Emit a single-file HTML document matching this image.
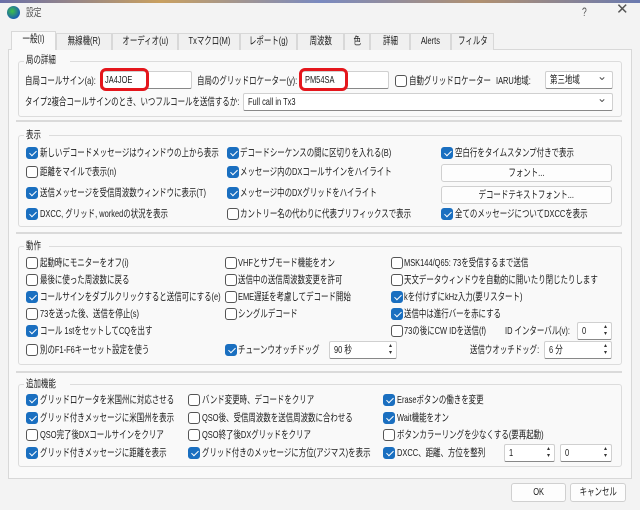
<!DOCTYPE html>
<html><head><meta charset="utf-8"><style>
*{box-sizing:border-box;margin:0;padding:0}
body{width:640px;height:510px;overflow:hidden;background:#f3f3f3;font-family:"Liberation Sans","Noto Sans CJK JP",sans-serif;font-size:10.5px;color:#1a1a1a;position:relative}
.a{position:absolute;white-space:nowrap;line-height:14px;transform:scaleX(.71);transform-origin:0 0}
.t{display:inline-block;white-space:nowrap;transform:scaleX(.71);transform-origin:0 0}
.c{display:inline-block;white-space:nowrap;transform:scaleX(.71);transform-origin:50% 0}
.cb{position:absolute;width:12px;height:12px;border:1px solid #555;border-radius:3px;background:#fff}
.cb.on{background:#1a6fc0;border-color:#1a6fc0}
.cb.on:after{content:"";position:absolute;left:3.5px;top:1px;width:3px;height:6px;border:solid #fff;border-width:0 1.5px 1.5px 0;transform:rotate(45deg)}
.in{position:absolute;height:18px;background:#fff;border:1px solid #d0d0d0;border-bottom:1px solid #888;border-radius:2px;padding:1px 4px;line-height:15px;white-space:nowrap;overflow:hidden}
.btn{position:absolute;height:18px;background:#fdfdfd;border:1px solid #d0d0d0;border-radius:3px;text-align:center;line-height:16px;white-space:nowrap;overflow:hidden}
.gb{position:absolute;border:1px solid #dcdcdc;border-radius:3px;background:#f9f9f9}
.gl{position:absolute;background:#f9f9f9;padding:0 2px;line-height:13px;white-space:nowrap}
.sep{position:absolute;left:16px;width:606px;height:2px;background:#dadada}
.tab{position:absolute;top:33px;height:17px;border:1px solid #d8d8d8;border-bottom:none;background:#f0f0f0;text-align:center;line-height:15px;white-space:nowrap;overflow:hidden}
.dd:after{content:"⌄";position:absolute;right:5px;top:-3px;font-size:12px;color:#555}
.sp:after{content:"▴\A▾";white-space:pre;position:absolute;right:4px;top:1px;font-size:6px;line-height:7px;color:#333}
.red{position:absolute;border:3px solid #e4161c;border-radius:6px}
</style></head><body>
<div style="position:absolute;left:0;top:0;width:640px;height:3px;background:linear-gradient(90deg,#6a6fa8,#c9a060,#7a8ac0,#b09070,#6a7ab0)"></div>
<div style="position:absolute;left:7px;top:6px;width:13px;height:13px;border-radius:50%;background:radial-gradient(circle at 40% 40%,#3ec04a,#1a5fb0 70%)"></div>
<div class="a" style="left:26px;top:6px;color:#555;font-size:11px">設定</div>
<div class="a" style="left:582px;top:5px;color:#555;font-size:12px">?</div>
<div class="a" style="left:616px;top:3px;color:#555;font-size:15px;transform:none">✕</div>
<div style="position:absolute;left:8px;top:49px;width:624px;height:430px;background:#f9f9f9;border:1px solid #d8d8d8"></div>
<div class="tab" style="left:11px;width:45px;top:31px;height:19px;background:#f9f9f9"><span class="c">一般(I)</span></div>
<div class="tab" style="left:56px;width:56px"><span class="c">無線機(R)</span></div>
<div class="tab" style="left:112px;width:66px"><span class="c">オーディオ(u)</span></div>
<div class="tab" style="left:178px;width:62px"><span class="c">Txマクロ(M)</span></div>
<div class="tab" style="left:240px;width:57px"><span class="c">レポート(g)</span></div>
<div class="tab" style="left:297px;width:47px"><span class="c">周波数</span></div>
<div class="tab" style="left:344px;width:26px"><span class="c">色</span></div>
<div class="tab" style="left:370px;width:40px"><span class="c">詳細</span></div>
<div class="tab" style="left:410px;width:41px"><span class="c">Alerts</span></div>
<div class="tab" style="left:451px;width:43px"><span class="c">フィルタ</span></div>

<div class="gb" style="left:18px;top:61px;width:604px;height:56px"></div>
<div class="gl" style="left:24px;top:54px"><span class="t">局の詳細</span></div>
<div class="a" style="left:25px;top:74px">自局コールサイン(a):</div>
<div class="in" style="left:100px;top:71px;width:92px"><span class="t">JA4JOE</span></div>
<div class="red" style="left:100px;top:68px;width:49px;height:23px"></div>
<div class="a" style="left:197px;top:74px">自局のグリッドロケーター(y):</div>
<div class="in" style="left:300px;top:71px;width:89px"><span class="t">PM54SA</span></div>
<div class="red" style="left:299px;top:68px;width:49px;height:23px"></div>
<div class="cb" style="left:395px;top:75px"></div>
<div class="a" style="left:409px;top:74px">自動グリッドロケーター</div>
<div class="a" style="left:496px;top:74px">IARU地域:</div>
<div class="in dd" style="left:545px;top:71px;width:68px"><span class="t">第三地域</span></div>
<div class="a" style="left:25px;top:95px">タイプ2複合コールサインのとき、いつフルコールを送信するか:</div>
<div class="in dd" style="left:243px;top:93px;width:370px"><span class="t">Full call in Tx3</span></div>

<div class="sep" style="top:120px"></div>
<div class="gb" style="left:18px;top:135px;width:604px;height:92px"></div>
<div class="gl" style="left:24px;top:129px"><span class="t">表示</span></div>
<div class="cb on" style="left:26px;top:147px"></div><div class="a" style="left:40px;top:146px">新しいデコードメッセージはウィンドウの上から表示</div>
<div class="cb on" style="left:227px;top:147px"></div><div class="a" style="left:240px;top:146px">デコードシーケンスの間に区切りを入れる(B)</div>
<div class="cb on" style="left:441px;top:147px"></div><div class="a" style="left:455px;top:146px">空白行をタイムスタンプ付きで表示</div>
<div class="cb" style="left:26px;top:166px"></div><div class="a" style="left:40px;top:165px">距離をマイルで表示(n)</div>
<div class="cb on" style="left:227px;top:166px"></div><div class="a" style="left:240px;top:165px">メッセージ内のDXコールサインをハイライト</div>
<div class="btn" style="left:441px;top:164px;width:171px"><span class="c">フォント...</span></div>
<div class="cb on" style="left:26px;top:187px"></div><div class="a" style="left:40px;top:186px">送信メッセージを受信周波数ウィンドウに表示(T)</div>
<div class="cb on" style="left:227px;top:187px"></div><div class="a" style="left:240px;top:186px">メッセージ中のDXグリッドをハイライト</div>
<div class="btn" style="left:441px;top:186px;width:171px"><span class="c">デコードテキストフォント...</span></div>
<div class="cb on" style="left:26px;top:208px"></div><div class="a" style="left:40px;top:207px">DXCC, グリッド, workedの状況を表示</div>
<div class="cb" style="left:227px;top:208px"></div><div class="a" style="left:240px;top:207px">カントリー名の代わりに代表プリフィックスで表示</div>
<div class="cb on" style="left:441px;top:208px"></div><div class="a" style="left:455px;top:207px">全てのメッセージについてDXCCを表示</div>

<div class="sep" style="top:232px"></div>
<div class="gb" style="left:18px;top:246px;width:604px;height:119px"></div>
<div class="gl" style="left:24px;top:240px"><span class="t">動作</span></div>
<div class="cb" style="left:26px;top:257px"></div><div class="a" style="left:40px;top:256px">起動時にモニターをオフ(i)</div>
<div class="cb" style="left:225px;top:257px"></div><div class="a" style="left:238px;top:256px">VHFとサブモード機能をオン</div>
<div class="cb" style="left:391px;top:257px"></div><div class="a" style="left:404px;top:256px">MSK144/Q65: 73を受信するまで送信</div>
<div class="cb" style="left:26px;top:274px"></div><div class="a" style="left:40px;top:273px">最後に使った周波数に戻る</div>
<div class="cb" style="left:225px;top:274px"></div><div class="a" style="left:238px;top:273px">送信中の送信周波数変更を許可</div>
<div class="cb" style="left:391px;top:274px"></div><div class="a" style="left:404px;top:273px">天文データウィンドウを自動的に開いたり閉じたりします</div>
<div class="cb on" style="left:26px;top:291px"></div><div class="a" style="left:40px;top:290px">コールサインをダブルクリックすると送信可にする(e)</div>
<div class="cb" style="left:225px;top:291px"></div><div class="a" style="left:238px;top:290px">EME遅延を考慮してデコード開始</div>
<div class="cb on" style="left:391px;top:291px"></div><div class="a" style="left:404px;top:290px">kを付けずにkHz入力(要リスタート)</div>
<div class="cb" style="left:26px;top:308px"></div><div class="a" style="left:40px;top:307px">73を送った後、送信を停止(s)</div>
<div class="cb" style="left:225px;top:308px"></div><div class="a" style="left:238px;top:307px">シングルデコード</div>
<div class="cb on" style="left:391px;top:308px"></div><div class="a" style="left:404px;top:307px">送信中は進行バーを赤にする</div>
<div class="cb on" style="left:26px;top:325px"></div><div class="a" style="left:40px;top:324px">コール 1stをセットしてCQを出す</div>
<div class="cb" style="left:391px;top:325px"></div><div class="a" style="left:404px;top:324px">73の後にCW IDを送信(f)</div>
<div class="a" style="left:505px;top:324px">ID インターバル(v):</div>
<div class="in sp" style="left:577px;top:322px;width:35px"><span class="t">0</span></div>
<div class="cb" style="left:26px;top:344px"></div><div class="a" style="left:40px;top:343px">別のF1-F6キーセット設定を使う</div>
<div class="cb on" style="left:225px;top:344px"></div><div class="a" style="left:238px;top:343px">チューンウオッチドッグ</div>
<div class="in sp" style="left:329px;top:341px;width:68px"><span class="t">90 秒</span></div>
<div class="a" style="left:470px;top:343px">送信ウオッチドッグ:</div>
<div class="in sp" style="left:544px;top:341px;width:68px"><span class="t">6 分</span></div>

<div class="sep" style="top:371px"></div>
<div class="gb" style="left:18px;top:384px;width:604px;height:83px"></div>
<div class="gl" style="left:24px;top:378px"><span class="t">追加機能</span></div>
<div class="cb on" style="left:26px;top:394px"></div><div class="a" style="left:40px;top:393px">グリッドロケータを米国州に対応させる</div>
<div class="cb" style="left:188px;top:394px"></div><div class="a" style="left:202px;top:393px">バンド変更時、デコードをクリア</div>
<div class="cb on" style="left:383px;top:394px"></div><div class="a" style="left:397px;top:393px">Eraseボタンの働きを変更</div>
<div class="cb on" style="left:26px;top:412px"></div><div class="a" style="left:40px;top:411px">グリッド付きメッセージに米国州を表示</div>
<div class="cb" style="left:188px;top:412px"></div><div class="a" style="left:202px;top:411px">QSO後、受信周波数を送信周波数に合わせる</div>
<div class="cb on" style="left:383px;top:412px"></div><div class="a" style="left:397px;top:411px">Wait機能をオン</div>
<div class="cb" style="left:26px;top:429px"></div><div class="a" style="left:40px;top:428px">QSO完了後DXコールサインをクリア</div>
<div class="cb" style="left:188px;top:429px"></div><div class="a" style="left:202px;top:428px">QSO終了後DXグリッドをクリア</div>
<div class="cb" style="left:383px;top:429px"></div><div class="a" style="left:397px;top:428px">ボタンカラーリングを少なくする(要再起動)</div>
<div class="cb on" style="left:26px;top:447px"></div><div class="a" style="left:40px;top:446px">グリッド付きメッセージに距離を表示</div>
<div class="cb on" style="left:188px;top:447px"></div><div class="a" style="left:202px;top:446px">グリッド付きのメッセージに方位(アジマス)を表示</div>
<div class="cb on" style="left:383px;top:447px"></div><div class="a" style="left:397px;top:446px">DXCC、距離、方位を整列</div>
<div class="in sp" style="left:504px;top:444px;width:51px"><span class="t">1</span></div>
<div class="in sp" style="left:560px;top:444px;width:52px"><span class="t">0</span></div>

<div class="btn" style="left:511px;top:483px;width:55px;height:19px"><span class="c">OK</span></div>
<div class="btn" style="left:570px;top:483px;width:56px;height:19px"><span class="c">キャンセル</span></div>
</body></html>
